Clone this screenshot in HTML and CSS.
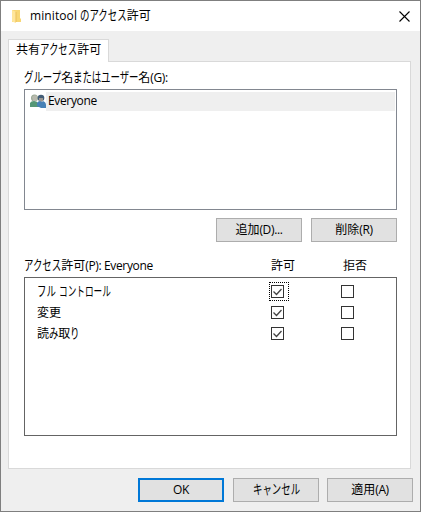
FILE: index.html
```html
<!DOCTYPE html>
<html lang="ja">
<head>
<meta charset="utf-8">
<title>minitool のアクセス許可</title>
<link rel="stylesheet" href="styles.css">
</head>
<body>
<div class="window">
  <header class="titlebar">
    <svg class="folder" width="12" height="14" viewBox="0 0 12 14"><path d="M1 1h8v8l1 1v3H1z" fill="#f8d775"/><path d="M1 1l4 2v11l-4-1.500z" fill="#ffe69c"/><path d="M5 3v10" stroke="#e9bf5c"/></svg>
    <h1><span class="latin">minitool</span> <span class="kana k5">のアクセス</span>許可</h1>
    <svg class="close" width="11" height="11" viewBox="0 0 11 11"><path d="M.5.5l10 10M10.500.5l-10 10" stroke="#000" stroke-width="1.100"/></svg>
  </header>
  <nav class="tabs"><div class="tab">共有<span class="kana k4">アクセス</span>許可</div></nav>
  <main class="pane">
    <div class="label"><span class="kana k4">グループ</span>名<span class="kana k3">または</span><span class="kana k4">ユーザー</span>名<span class="latin">(G):</span></div>
    <div class="users">
      <div class="user">
        <svg width="16" height="14" viewBox="0 0 16 14"><circle cx="4.500" cy="4" r="3.500" fill="#9aa994"/><path d="M2 3q2-3 5-1v5H3z" fill="#b8b9ad"/><path d="M0 13V9q1-2 4-2t5 3v3z" fill="#559676"/><circle cx="11" cy="4" r="3.300" fill="#435d77"/><path d="M9 4h4v3l-2 1-2-1z" fill="#9c9791"/><path d="M7 12V9q1-2 3-2l2 1 1-1q3 1 3 4v3h-5z" fill="#4781b6"/></svg>
        <span class="user-name"><span class="latin">Everyone</span></span>
      </div>
    </div>
    <div class="actions"><div class="button">追加<span class="latin">(D)...</span></div><div class="button">削除<span class="latin">(R)</span></div></div>
    <div class="columns"><span class="subject"><span class="kana k4">アクセス</span>許可<span class="latin">(P): Everyone</span></span><span class="allow">許可</span><span>拒否</span></div>
    <div class="permissions">
      <div class="row"><span class="name"><span class="kana k2">フル</span> <span class="kana tight">コントロール</span></span><span class="focus"><span class="box"><svg width="11" height="11"><path d="M1.500 5.500l3 3 5-5.500"/></svg></span></span><span class="box"></span></div>
      <div class="row"><span class="name">変更</span><span class="cell"><span class="box"><svg width="11" height="11"><path d="M1.500 5.500l3 3 5-5.500"/></svg></span></span><span class="box"></span></div>
      <div class="row"><span class="name">読<span class="kana k1">み</span>取<span class="kana k1">り</span></span><span class="cell"><span class="box"><svg width="11" height="11"><path d="M1.500 5.500l3 3 5-5.500"/></svg></span></span><span class="box"></span></div>
    </div>
  </main>
  <footer class="footer"><div class="button primary"><span class="latin">OK</span></div><div class="button"><span class="kana k5">キャンセル</span></div><div class="button apply">適用<span class="latin">(A)</span></div></footer>
</div>
</body>
</html>
```
FILE: styles.css
```css
* { box-sizing: border-box; }
body { margin: 0; font: 12px/16px "Noto Sans", "Noto Sans CJK JP", sans-serif; color: #000; }
.window { width: 421px; height: 512px; border: 1px solid #7f7f7f; background: #efefef; white-space: nowrap; }
svg { display: block; flex: none; }
.latin { font-family: "Open Sans", sans-serif; letter-spacing: -.35px; }
.kana { display: inline-block; transform: scale(.785, 1.12); transform-origin: left center; }
.k1 { width: .775em; }
.k2 { width: 1.55em; }
.k3 { width: 2.325em; }
.k4 { width: 3.1em; }
.k5 { width: 3.875em; }
.tight { transform: scale(.72, 1.12); width: 4.26em; }

.titlebar { display: flex; align-items: center; height: 30px; padding: 0 10px 0 10px; background: #fff; }
.titlebar h1 { flex: 1; margin: 0 0 0 7px; font-size: 12px; font-weight: 400; }
.titlebar h1 .latin { letter-spacing: .1px; }

.tabs { height: 30px; padding: 8px 0 0 7px; }
.tab { position: relative; width: 101px; height: 23px; padding: 2px 0 0 7px; border: 1px solid #d9d9d9; border-bottom: 0; background: #fff; }
.pane { width: 403px; height: 408px; margin-left: 7px; padding: 8px 13px 0 15px; border: 1px solid #d9d9d9; background: #fff; }
.label { height: 19px; }
.users { height: 121px; padding: 1px 1px 0 5px; border: 1px solid #828790; }
.user { display: flex; height: 20px; align-items: center; }
.user-name { flex: 1; height: 19px; padding: 1px 0 0 2px; background: #efefef; }
.actions { display: flex; justify-content: flex-end; gap: 9px; margin-top: 8px; }
.button { display: flex; align-items: center; justify-content: center; width: 86px; height: 24px; border: 1px solid #adadad; background: #e1e1e1; }
.primary { border: 2px solid #0078d7; }
.columns { display: flex; margin-top: 16px; height: 19px; }
.subject { width: 247px; }
.allow { width: 72px; }
.permissions { height: 159px; padding: 3px 0 0 12px; border: 1px solid #646464; }
.row { display: flex; align-items: center; height: 21px; }
.name { width: 232px; }
.focus { width: 20px; height: 19px; padding: 2px 1px; border: 1px dotted #000; margin-right: 52px; }
.cell { width: 20px; padding-left: 2px; margin-right: 52px; }
.box { display: block; width: 13px; height: 13px; border: 1px solid #333; background: #fff; }
.box path { fill: none; stroke: #444; stroke-width: 1.3; }
.footer { display: flex; gap: 9px; padding: 9px 0 0 137px; }
.footer .apply { margin-left: -1px; }
```
